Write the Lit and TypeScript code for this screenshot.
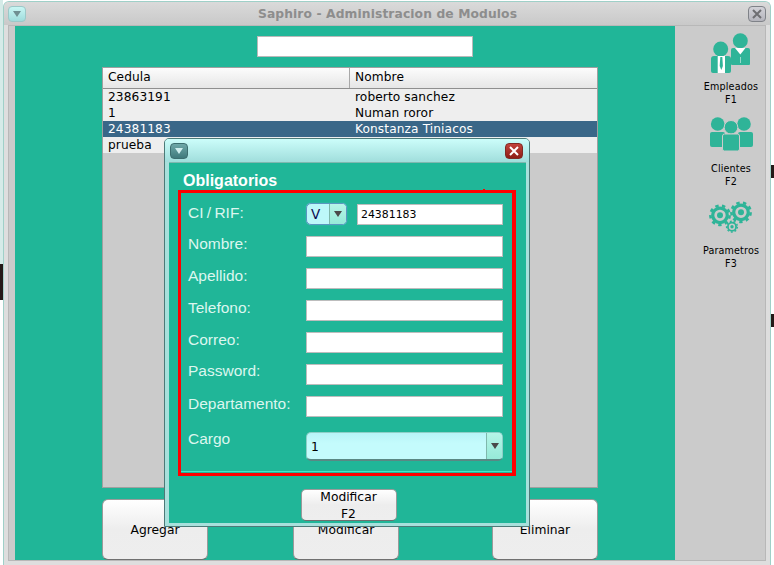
import { LitElement, html, css, svg } from "lit";
import { customElement } from "lit/decorators.js";

const ROWS = [
  ["23863191", "roberto sanchez"],
  ["1", "Numan roror"],
  ["24381183", "Konstanza Tiniacos"],
  ["prueba", ""],
];
const SELECTED = 2;

const FIELDS = [
  { label: "Nombre:" },
  { label: "Apellido:" },
  { label: "Telefono:" },
  { label: "Correo:" },
  { label: "Password:", up: true },
  { label: "Departamento:" },
];

const TEAL = "#2fb498";

const gear = (cx: number, cy: number, r: number) => svg`
  <circle cx=${cx} cy=${cy} r=${r * 0.68} fill="none" stroke=${TEAL} stroke-width=${r * 0.3} />
  <circle cx=${cx} cy=${cy} r=${r * 0.9} fill="none" stroke=${TEAL} stroke-width=${r * 0.24}
    stroke-dasharray=${`${(r * 0.9 * 6.283) / 18} ${(r * 0.9 * 6.283) / 18}`} />
  <circle cx=${cx} cy=${cy} r=${r * 0.28} fill=${TEAL} />
`;

const ICON_EMPLEADOS = html`<svg class="icon" viewBox="0 0 44 40" width="44" height="40">
  <circle cx="11.700" cy="16" r="7.500" fill=${TEAL} />
  <path d="M2 26q0-3 3-3h14q3 0 3 3v12q0 2-2 2H4q-2 0-2-2z" fill=${TEAL} />
  <path d="M8.700 23H16v17H8.700z" fill="#fff" />
  <path d="M11.300 24h2l.6 9-1.600 4-1.600-4z" fill=${TEAL} />
  <circle cx="31.300" cy="7.800" r="7.500" fill=${TEAL} />
  <path d="M22 17q0-2 2-2h15q2 0 2 2v14q0 1-1 1H23q-1 0-1-1z" fill=${TEAL} />
  <path d="M26 15h10.500l-5.200 6.500z" fill="#fff" />
  <path d="M31 24.500h1v1h-1zM31 26.500h1v1h-1zM31 28.500h1v1h-1z" fill="#fff" />
</svg>`;

const ICON_CLIENTES = html`<svg class="icon" viewBox="0 0 44 40" width="44" height="40">
  <circle cx="8.700" cy="9" r="6.800" fill=${TEAL} />
  <circle cx="35" cy="9" r="6.800" fill=${TEAL} />
  <path d="M1 19q0-2 2-2h11q2 0 2 2v11q0 2-2 2H3q-2 0-2-2z" fill=${TEAL} />
  <path d="M29 19q0-2 2-2h11q2 0 2 2v11q0 2-2 2H31q-2 0-2-2z" fill=${TEAL} />
  <circle cx="22" cy="12.300" r="6.800" fill=${TEAL} stroke="#cbcbcb" stroke-width="1" />
  <path d="M13.500 21q0-2 2-2h13q2 0 2 2v13q0 2-2 2h-13q-2 0-2-2z" fill=${TEAL} stroke="#cbcbcb" stroke-width="1" />
</svg>`;

const ICON_PARAMETROS = html`<svg class="icon" viewBox="0 0 44 40" width="44" height="40">
  ${gear(11, 18.3, 10.7)} ${gear(32, 15.3, 10.7)} ${gear(23, 29.7, 6)}
</svg>`;

@customElement("app-root")
export class AppRoot extends LitElement {
  static styles = css`
    :host {
      display: block;
      position: relative;
      width: 774px;
      height: 565px;
      overflow: hidden;
      background: #fff;
      font-family: "DejaVu Sans", sans-serif;
      color: #000;
    }

    /* bits of wallpaper showing behind the window */
    .blob {
      position: absolute;
      background: #241a18;
    }
    .blob.a {
      left: 0;
      top: 264px;
      width: 3px;
      height: 36px;
    }
    .blob.b {
      left: 771px;
      top: 165px;
      width: 3px;
      height: 13px;
    }
    .blob.c {
      left: 771px;
      top: 314px;
      width: 3px;
      height: 13px;
    }
    .tint {
      position: absolute;
      left: 0;
      top: 0;
      width: 3px;
      height: 264px;
      background: #d5ebe8;
    }

    .window {
      position: absolute;
      left: 3px;
      top: 1px;
      width: 768px;
      height: 564px;
      box-sizing: border-box;
      display: flex;
      flex-direction: column;
      border: 1px solid #9fd0c8;
      border-bottom: none;
      border-radius: 6px 6px 0 0;
      background: #dedede;
    }

    .titlebar {
      flex: none;
      height: 23px;
      display: flex;
      align-items: center;
      justify-content: space-between;
      padding: 0 4px 0 4px;
      background: linear-gradient(#dadada, #c9c9c9);
      border-radius: 5px 5px 0 0;
    }
    .title {
      font-size: 12.3px;
      font-weight: bold;
      color: #8d8d8d;
      letter-spacing: 0.1px;
      margin-left: 1px;
    }
    .tbtn {
      width: 18px;
      height: 16px;
      box-sizing: border-box;
      border-radius: 4px;
      display: flex;
      align-items: center;
      justify-content: center;
    }
    .tbtn.menu {
      background: linear-gradient(#c9f6f4, #9fdcdc);
      border: 1px solid #9cc8c8;
    }
    .tbtn.close {
      background: linear-gradient(#d2d2d8, #b4b4bc);
      border: 1px solid #7f8288;
    }

    .content {
      flex: 1;
      min-height: 0;
      display: flex;
      margin: 0 4px 4px 4px;
      border: 1px solid #b8b8b8;
      padding-left: 6px;
      background: #cbcbcb;
    }

    .main {
      flex: none;
      width: 660px;
      box-sizing: border-box;
      padding: 10px 77px 0 87px;
      display: flex;
      flex-direction: column;
      background: #20b698;
    }
    .search {
      align-self: flex-start;
      width: 216px;
      height: 21px;
      box-sizing: border-box;
      background: #fff;
      border: 1px solid #b9b9b9;
      margin-left: 155px;
    }

    .table {
      margin-top: 10px;
      height: 423px;
      box-sizing: border-box;
      background: #cbcbcb;
      border: 1px solid #a0a0a0;
      font-size: 12.2px;
      letter-spacing: 0.1px;
    }
    .thead,
    .tr {
      display: grid;
      grid-template-columns: 246px 1fr;
    }
    .thead {
      height: 21px;
      box-sizing: border-box;
      border-bottom: 1px solid #8f8f8f;
      background: linear-gradient(#fcfcfc, #e6e6e6);
      line-height: 18px;
    }
    .thead div {
      padding-left: 5px;
    }
    .thead div + div {
      border-left: 1px solid #a8a8a8;
    }
    .tr {
      height: 16px;
      line-height: 16px;
      background: #eeeeee;
    }
    .tr div {
      padding-left: 5px;
    }
    .tr div + div {
      padding-left: 6px;
    }
    .tr.sel {
      background: #3a6788;
      color: #fff;
    }

    .actions {
      display: flex;
      margin-top: 11px;
    }
    .btn {
      height: 61px;
      width: 106px;
      box-sizing: border-box;
      display: flex;
      align-items: center;
      justify-content: center;
      border: 1px solid #9a9a9a;
      border-bottom-color: #707070;
      border-radius: 6px;
      background: linear-gradient(#ffffff, #ededed 50%, #eeeeee);
      font-size: 12.3px;
    }
    .btn.mid {
      margin: 0 93px 0 85px;
    }

    .side {
      flex: 1;
      display: flex;
      flex-direction: column;
      align-items: center;
      padding: 7px 0 0 22px;
      font-size: 9.6px;
      line-height: 13px;
      letter-spacing: 0.15px;
    }
    .mod {
      height: 82px;
      display: flex;
      flex-direction: column;
      align-items: center;
      text-align: center;
    }
    .mod .icon {
      display: block;
      overflow: visible;
      margin-bottom: 7px;
    }

    /* floating dialog */
    .dialog {
      position: absolute;
      left: 164px;
      top: 138px;
      width: 366px;
      height: 389px;
      box-sizing: border-box;
      display: flex;
      flex-direction: column;
      border: 1px solid #4c7a78;
      border-radius: 5px 5px 0 0;
      background: #a8e0dc;
    }
    .dlg-title {
      flex: none;
      height: 23px;
      display: flex;
      align-items: center;
      justify-content: space-between;
      padding: 0 6px 0 5px;
      background: linear-gradient(#ccfdfa, #a0dedc);
      border-radius: 4px 4px 0 0;
    }
    .dlg-title .tbtn.menu {
      background: linear-gradient(#6fa8a8, #3f7a7c);
      border: 1px solid #3d6f70;
    }
    .dlg-title .tbtn.close {
      background: linear-gradient(#c2443c, #8e1d15);
      border: 1px solid #7f2a24;
    }
    .dlg-body {
      flex: 1;
      margin: 0 3px 3px 4px;
      border-top: 1px solid #7fb8b0;
      background: #20b698;
      padding: 8px 9px 0 9px;
      display: flex;
      flex-direction: column;
      font-family: "Liberation Sans", sans-serif;
      color: #dcf6ef;
    }
    .dlg-head {
      font-size: 16px;
      font-weight: bold;
      line-height: 19px;
      color: #fff;
      padding-left: 5px;
    }
    .red {
      position: relative;
      height: 286px;
      width: 338px;
      box-sizing: border-box;
      border: 3px solid #f00;
      border-right-width: 4px;
      padding: 11px 9px 0 7px;
    }
    .red::before {
      content: "";
      position: absolute;
      right: 27px;
      top: -4px;
      width: 2px;
      height: 1px;
      background: #f00;
    }
    .red::after {
      content: "";
      position: absolute;
      left: 0;
      right: 0;
      bottom: 1px;
      height: 1px;
      background: #45e6c8;
    }
    .row {
      display: flex;
      height: 21px;
      margin-bottom: 11px;
    }
    .row label {
      width: 118px;
      flex: none;
      font-size: 15.5px;
      line-height: 16px;
    }
    .row.first label {
      line-height: 18px;
      word-spacing: -1px;
    }
    .row label.up {
      margin-top: -1px;
    }
    .row label.cargo {
      margin-top: 3px;
    }
    .input {
      flex: 1;
      height: 21px;
      box-sizing: border-box;
      background: #fff;
      border: 1px solid #bdbdbd;
      font-family: "DejaVu Sans", sans-serif;
      font-size: 10.9px;
      line-height: 19px;
      color: #000;
      padding-left: 3px;
    }
    .combo {
      flex: none;
      width: 41px;
      height: 22px;
      margin: -1px 10px 0 0;
      box-sizing: border-box;
      display: flex;
      border: 1px solid #5a96c0;
      box-shadow: 0 0 1px #7fb8e0;
      border-radius: 5px;
      overflow: hidden;
      background: #bdf8fa;
      color: #0a0a50;
      font-family: "DejaVu Sans", sans-serif;
      font-size: 13.5px;
      line-height: 20px;
    }
    .combo span {
      flex: 1;
      padding-left: 4px;
    }
    .combo i,
    .select i {
      flex: none;
      display: flex;
      align-items: center;
      justify-content: center;
      background: linear-gradient(#b6f5e8, #96ead8);
      border-left: 1px solid #7fb8ac;
    }
    .combo i {
      width: 16px;
    }
    .select {
      display: flex;
      flex: 1;
      height: 29px;
      margin-top: 4px;
      box-sizing: border-box;
      border-radius: 5px;
      border: 1px solid #8fcfc8;
      border-bottom: 2px solid #5a8884;
      overflow: hidden;
      background: linear-gradient(#b8f4f8, #c4fbfc 40%, #c4fbfc);
      color: #000;
      font-family: "DejaVu Sans", sans-serif;
      font-size: 12.3px;
      line-height: 28px;
    }
    .select span {
      flex: 1;
      padding-left: 4px;
    }
    .select i {
      width: 15px;
    }
    .arrow {
      width: 0;
      height: 0;
      border: 4px solid transparent;
      border-top: 6px solid #4a4a4a;
      border-bottom: 0;
    }
    .dlg-foot {
      display: flex;
      justify-content: center;
      padding: 13px 0 0 0;
    }
    .btn.small {
      width: 96px;
      height: 32px;
      display: block;
      overflow: hidden;
      text-align: center;
      line-height: 17px;
      color: #000;
      font-family: "DejaVu Sans", sans-serif;
      border-radius: 5px;
      margin-left: 2px;
    }
    .btn.small div {
      margin-top: -1px;
    }
  `;

  render() {
    return html`
      <div class="tint"></div>
      <div class="blob a"></div>
      <div class="blob b"></div>
      <div class="blob c"></div>

      <div class="window">
        <div class="titlebar">
          <div class="tbtn menu">
            <svg width="8" height="6" viewBox="0 0 8 6"><path d="M0 0h8L4 6z" fill="#6f8f92" /></svg>
          </div>
          <div class="title">Saphiro - Administracion de Modulos</div>
          <div class="tbtn close">
            <svg width="10" height="10" viewBox="0 0 10 10">
              <path d="M1 1l8 8M9 1l-8 8" stroke="#6e6e72" stroke-width="2" />
            </svg>
          </div>
        </div>

        <div class="content">
          <div class="main">
            <div class="search"></div>
            <div class="table">
              <div class="thead"><div>Cedula</div><div>Nombre</div></div>
              ${ROWS.map(
                (r, i) => html`<div class="tr ${i === SELECTED ? "sel" : ""}">
                  <div>${r[0]}</div>
                  <div>${r[1]}</div>
                </div>`
              )}
            </div>
            <div class="actions">
              <div class="btn">Agregar</div>
              <div class="btn mid">Modificar</div>
              <div class="btn">Eliminar</div>
            </div>
          </div>
          <div class="side">
            <div class="mod">${ICON_EMPLEADOS}<span>Empleados<br />F1</span></div>
            <div class="mod">${ICON_CLIENTES}<span>Clientes<br />F2</span></div>
            <div class="mod">${ICON_PARAMETROS}<span>Parametros<br />F3</span></div>
          </div>
        </div>
      </div>

      <div class="dialog">
        <div class="dlg-title">
          <div class="tbtn menu">
            <svg width="8" height="6" viewBox="0 0 8 6"><path d="M0 0h8L4 6z" fill="#cfeeee" /></svg>
          </div>
          <div class="tbtn close">
            <svg width="10" height="10" viewBox="0 0 10 10">
              <path d="M1 1l8 8M9 1l-8 8" stroke="#fff" stroke-width="2" />
            </svg>
          </div>
        </div>
        <div class="dlg-body">
          <div class="dlg-head">Obligatorios</div>
          <div class="red">
            <div class="row first">
              <label>CI / RIF:</label>
              <div class="combo"><span>V</span><i><b class="arrow"></b></i></div>
              <div class="input">24381183</div>
            </div>
            ${FIELDS.map(
              (f) => html`<div class="row">
                <label class=${f.up ? "up" : ""}>${f.label}</label>
                <div class="input"></div>
              </div>`
            )}
            <div class="row">
              <label class="cargo">Cargo</label>
              <div class="select"><span>1</span><i><b class="arrow"></b></i></div>
            </div>
          </div>
          <div class="dlg-foot">
            <div class="btn small"><div>Modificar<br />F2</div></div>
          </div>
        </div>
      </div>
    `;
  }
}
